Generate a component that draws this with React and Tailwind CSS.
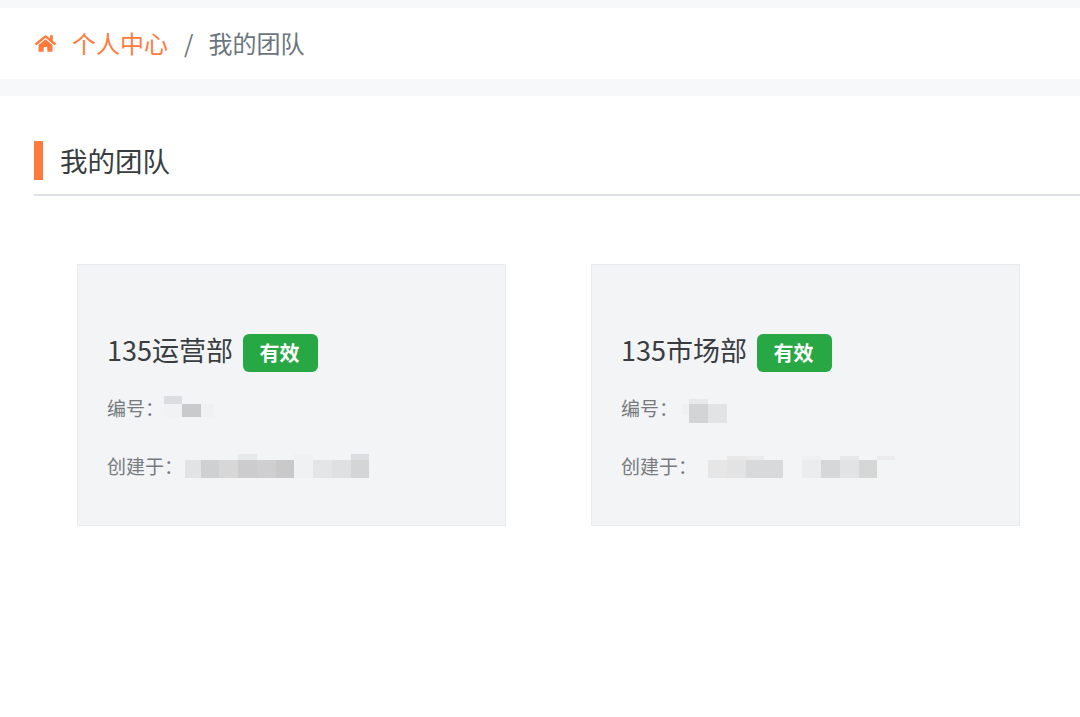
import { FaHome } from "react-icons/fa";

const font = { fontFamily: '"Noto Sans CJK SC", sans-serif' };

// 打码色块: [x, y, w, h, fill]
const teams = [
  {
    name: "135运营部",
    code: [
      [0, 0, 18, 8, "#dcdde0"],
      [0, 8, 18, 13, "#f1f2f4"],
      [18, 8, 19, 13, "#c9cacc"],
      [37, 8, 13, 13, "#f0f1f3"],
    ],
    date: [
      [0, 6, 16, 18, "#e2e3e4"],
      [16, 6, 18, 18, "#cfd0d2"],
      [34, 6, 19, 18, "#d6d7d6"],
      [53, 0, 19, 6, "#e8e9ea"],
      [53, 6, 19, 18, "#ccccce"],
      [72, 6, 19, 18, "#cfcfd1"],
      [91, 6, 18, 18, "#c8c9c8"],
      [109, 0, 19, 24, "#f0f1f2"],
      [128, 6, 19, 18, "#e4e5e7"],
      [147, 6, 19, 18, "#dfe0e2"],
      [166, 0, 18, 6, "#dcdde0"],
      [166, 6, 18, 18, "#d4d5d7"],
    ],
  },
  {
    name: "135市场部",
    code: [
      [0, 8, 7, 11, "#f0f1f3"],
      [7, 3, 19, 5, "#e8e9ea"],
      [7, 8, 19, 19, "#d3d4d5"],
      [26, 8, 19, 19, "#e2e3e5"],
    ],
    date: [
      [0, 6, 19, 18, "#e5e6e5"],
      [19, 2, 19, 4, "#e8e8e9"],
      [19, 6, 19, 18, "#e3e3e3"],
      [38, 2, 18, 4, "#ebebec"],
      [38, 6, 37, 18, "#d8d9db"],
      [94, 2, 19, 4, "#f0f0f2"],
      [94, 6, 19, 18, "#ebecee"],
      [113, 6, 19, 18, "#d6d7d9"],
      [132, 2, 19, 4, "#e8e8e9"],
      [132, 6, 19, 18, "#e2e3e5"],
      [151, 6, 18, 18, "#d5d7d6"],
      [169, 2, 18, 4, "#ececee"],
    ],
  },
];

function Mosaic({ blocks, width, height }) {
  return (
    <svg width={width} height={height} viewBox={`0 0 ${width} ${height}`} className="block shrink-0">
      {blocks.map(([x, y, w, h, fill], i) => (
        <rect key={i} x={x} y={y} width={w} height={h} fill={fill} />
      ))}
    </svg>
  );
}

function TeamCard({ team, gapCode, gapDate }) {
  return (
    <div className="w-[429px] h-[262px] bg-[#f3f4f6] border border-[#e9ebee] pl-[29px] pt-[69px]">
      <div className="flex items-center h-[38px]">
        <span className="text-[27px] leading-[38px] text-[#3a3d40] -translate-y-[3px]">{team.name}</span>
        <span className="ml-[10px] w-[75px] h-[38px] pr-[2px] rounded-md bg-[#28a745] text-white text-[20px] font-bold flex items-center justify-center">
          有效
        </span>
      </div>
      <div className="flex items-start h-[24px] mt-[24px] text-[19px] leading-[24px] text-[#777b7f]">
        <span>编号：</span>
        <div style={{ marginLeft: gapCode }}>
          <Mosaic blocks={team.code} width={50} height={27} />
        </div>
      </div>
      <div className="flex items-start h-[24px] mt-[34px] text-[19px] leading-[24px] text-[#777b7f]">
        <span>创建于：</span>
        <div style={{ marginLeft: gapDate }}>
          <Mosaic blocks={team.date} width={190} height={24} />
        </div>
      </div>
    </div>
  );
}

export default function App() {
  return (
    <div className="w-full h-[717px] overflow-hidden bg-white" style={font}>
      <div className="h-[8px] bg-[#f7f8fa]" />
      <div className="h-[71px] pl-[35px] flex items-center text-[24px] pb-[1px]">
        <FaHome className="w-[21px] h-[21px] text-[#ff7a3c]" />
        <span className="ml-[16px] text-[#ff7a3c]">个人中心</span>
        <span className="ml-[16px] text-[#6c757d]">/</span>
        <span className="ml-[15px] text-[#6c757d]">我的团队</span>
      </div>
      <div className="h-[17px] bg-[#f7f8fa]" />

      <div className="pl-[34px] pt-[45px]">
        <div className="border-b-2 border-[#dee2e6] pb-[14px]">
          <div className="flex items-center h-[39px] border-l-[9px] border-[#ff7a3c] pl-[17px] text-[27.5px] text-[#3a3d40]">
            我的团队
          </div>
        </div>
      </div>

      <div className="pl-[77px] pt-[68px] flex gap-[85px]">
        <TeamCard team={teams[0]} gapCode={0} gapDate={2} />
        <TeamCard team={teams[1]} gapCode={4} gapDate={11} />
      </div>
    </div>
  );
}
